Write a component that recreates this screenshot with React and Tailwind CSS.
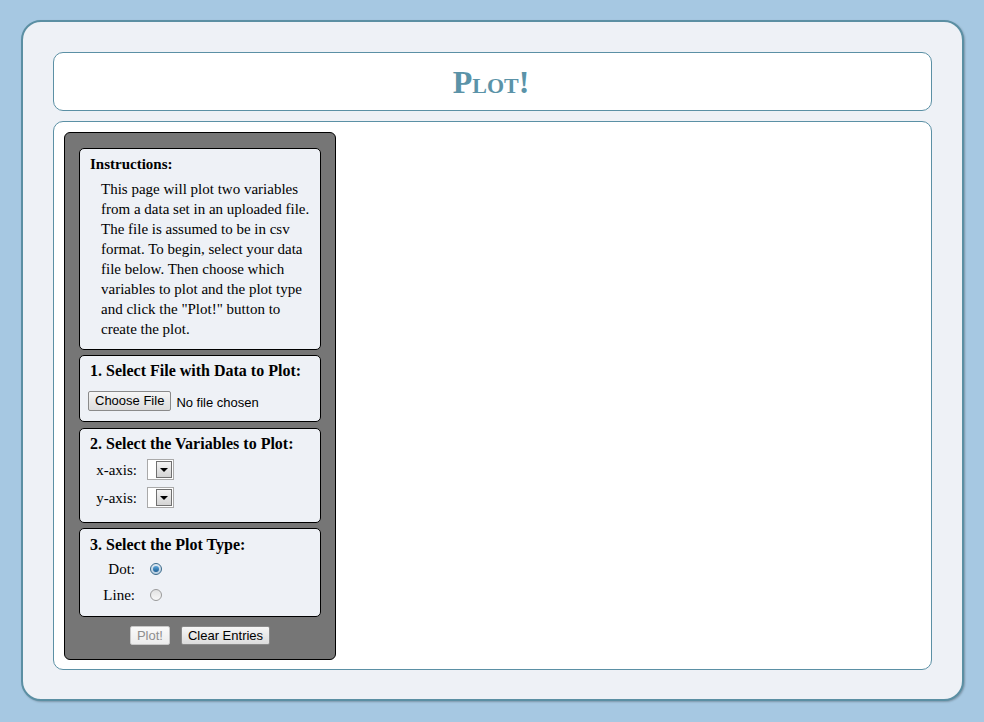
export default function App() {
  const serif = { fontFamily: '"Liberation Serif", "Times New Roman", serif' };
  const sans = { fontFamily: '"Liberation Sans", Arial, sans-serif' };

  const Select = () => (
    <div className="flex h-[21px] w-[27px] border border-[#a9a9a9] bg-white">
      <div className="w-[7px]" />
      <div className="m-[1px] flex flex-1 items-center justify-center border border-[#707070] bg-gradient-to-b from-[#f4f4f4] to-[#d4d4d4]">
        <div className="h-0 w-0 border-x-[4px] border-t-[4px] border-x-transparent border-t-black" />
      </div>
    </div>
  );

  const Radio = ({ on }) =>
    on ? (
      <div className="flex h-[12px] w-[12px] items-center justify-center rounded-full border border-[#3a6a8a] bg-gradient-to-b from-[#dfe9f2] to-[#b6cde0]">
        <div className="h-[6px] w-[6px] rounded-full bg-gradient-to-b from-[#5aa6dc] to-[#1c5e93]" />
      </div>
    ) : (
      <div className="h-[12px] w-[12px] rounded-full border border-[#9a9a9a] bg-gradient-to-b from-[#e2e2e2] to-[#f8f8f8]" />
    );

  return (
    <div className="min-h-screen bg-[#a6c8e2] px-[21px] pt-[20px] pb-[21px]">
      <div className="flex h-[681px] w-[943px] flex-col gap-[10px] rounded-[20px] border-2 border-[#5b8fa3] bg-[#eef1f6] px-[30px] pt-[30px] shadow-[1px_1px_2px_rgba(0,0,0,0.25)]">
        <div className="flex h-[59px] items-center justify-center rounded-[10px] border border-[#5b90a5] bg-white">
          <h1
            className="pr-[3px] text-[32px] font-bold leading-none text-[#5b93a8] [font-variant:small-caps]"
            style={serif}
          >
            Plot!
          </h1>
        </div>

        <div className="flex h-[549px] rounded-[10px] border border-[#5b90a5] bg-white p-[10px]">
          <div
            className="flex h-[528px] w-[272px] flex-col rounded-[6px] border border-black bg-[#767676] px-[14px] pt-[15px] text-[15px] text-black"
            style={serif}
          >
            <div className="h-[202px] rounded-[5px] border border-black bg-[#eef1f6] pl-[10px] pr-[10px] pt-[5px]">
              <div className="font-bold leading-[20px]">Instructions:</div>
              <p className="mt-[5px] pl-[11px] leading-[20px]">
                This page will plot two variables from a data set in an uploaded
                file. The file is assumed to be in csv format. To begin, select
                your data file below. Then choose which variables to plot and
                the plot type and click the "Plot!" button to create the plot.
              </p>
            </div>

            <div className="mt-[5px] h-[67px] rounded-[5px] border border-black bg-[#eef1f6] pl-[8px] pt-[5px]">
              <div className="pl-[2px] text-[16px] font-bold leading-[20px]">
                1. Select File with Data to Plot:
              </div>
              <div className="mt-[8px] flex items-center gap-[5px] text-[13px]" style={sans}>
                <button className="h-[20px] rounded-[2px] border border-[#8a8a8a] bg-gradient-to-b from-[#f6f6f6] to-[#dcdcdc] px-[6px] leading-none text-black">
                  Choose File
                </button>
                <span className="pt-[4px]">No file chosen</span>
              </div>
            </div>

            <div className="mt-[6px] h-[95px] rounded-[5px] border border-black bg-[#eef1f6] pl-[10px] pt-[5px]">
              <div className="text-[16px] font-bold leading-[20px]">
                2. Select the Variables to Plot:
              </div>
              <div className="mt-[5px] grid grid-cols-[47px_auto] items-center gap-x-[10px] gap-y-[7px]">
                <span className="text-right leading-[20px]">x-axis:</span>
                <Select />
                <span className="text-right leading-[20px]">y-axis:</span>
                <Select />
              </div>
            </div>

            <div className="mt-[5px] h-[89px] rounded-[5px] border border-black bg-[#eef1f6] pl-[10px] pt-[6px]">
              <div className="text-[16px] font-bold leading-[20px]">
                3. Select the Plot Type:
              </div>
              <div className="mt-[4px] grid grid-cols-[45px_auto] items-center gap-x-[15px] gap-y-[6px]">
                <span className="text-right leading-[20px]">Dot:</span>
                <Radio on />
                <span className="text-right leading-[20px]">Line:</span>
                <Radio />
              </div>
            </div>

            <div className="mt-[9px] flex justify-center gap-[11px] text-[13px]" style={sans}>
              <button className="h-[19px] rounded-[2px] border border-[#c8c8c8] bg-gradient-to-b from-[#fafafa] to-[#ececec] px-[6px] leading-none text-[#8e8e8e]">
                Plot!
              </button>
              <button className="h-[19px] rounded-[2px] border border-[#8a8a8a] bg-gradient-to-b from-[#f6f6f6] to-[#dcdcdc] px-[6px] leading-none text-black">
                Clear Entries
              </button>
            </div>
          </div>
        </div>
      </div>
    </div>
  );
}
